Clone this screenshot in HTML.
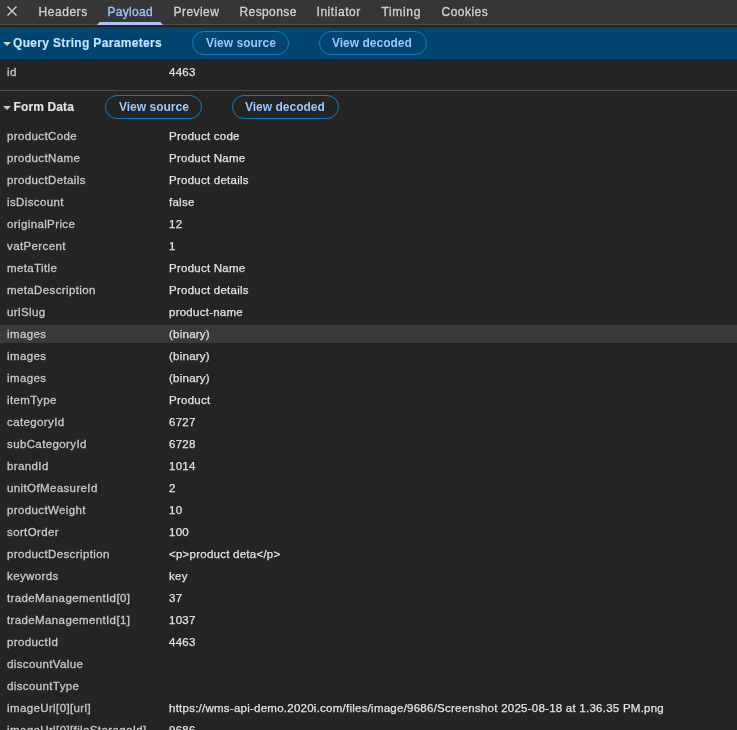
<!DOCTYPE html>
<html><head><meta charset="utf-8">
<style>
html,body{margin:0;padding:0;}
body{width:737px;height:730px;overflow:hidden;background:#242424;position:relative;font-family:"Liberation Sans",sans-serif;font-size:12px;}
#root{position:absolute;left:0;top:0;width:737px;height:730px;background:#242424;will-change:transform;}
.t{position:absolute;line-height:14px;white-space:pre;-webkit-text-stroke:0.25px currentColor;}
#tabbar{position:absolute;left:0;top:0;width:737px;height:24px;background:#363636;}
#tabline{position:absolute;left:0;top:24px;width:737px;height:1px;background:#505050;}
.tab{color:#d2d2d2;top:5px;-webkit-text-stroke:0.3px currentColor;}
#ul{position:absolute;left:97px;top:22px;width:66px;height:3px;background:#a8c7fa;clip-path:polygon(2.5px 0,calc(100% - 2.5px) 0,100% 100%,0 100%);}
#qsp{position:absolute;left:0;top:27px;width:737px;height:32px;background:#004470;}
.hdr{font-weight:bold;-webkit-text-stroke:0.15px currentColor;}
.btn{position:absolute;box-sizing:border-box;height:24px;border:1px solid #137bbd;border-radius:12px;}
.bt{color:#9cc6fc;font-weight:bold;-webkit-text-stroke:0;}
.sep{position:absolute;left:0;top:90px;width:737px;height:1px;background:#505050;}
.k{color:#c9c9c9;left:7px;font-size:11.5px;letter-spacing:0.38px;-webkit-text-stroke:0.3px currentColor;}
.v{color:#e3e3e3;left:169px;font-size:11.5px;letter-spacing:0.245px;}
#hl{position:absolute;left:0;top:325px;width:737px;height:18px;background:#393939;}
.tri{position:absolute;width:0;height:0;border-left:4px solid transparent;border-right:4px solid transparent;border-top:4px solid #c8c8c8;}
</style></head><body>
<div id="root">
<div id="tabbar"></div>
<div id="tabline"></div>
<svg style="position:absolute;left:7px;top:6px" width="10" height="10" viewBox="0 0 10 10"><path d="M0.5 0.5L9.5 9.5M9.5 0.5L0.5 9.5" stroke="#c7c7c7" stroke-width="1.5"/></svg>
<div class="t tab" style="left:38.5px;letter-spacing:0.55px">Headers</div>
<div class="t tab" style="left:107.5px;letter-spacing:0.3px;color:#a0c6fc">Payload</div>
<div class="t tab" style="left:173.5px;letter-spacing:0.45px">Preview</div>
<div class="t tab" style="left:239.5px;letter-spacing:0.4px">Response</div>
<div class="t tab" style="left:316.5px;letter-spacing:0.55px">Initiator</div>
<div class="t tab" style="left:381.5px;letter-spacing:0.66px">Timing</div>
<div class="t tab" style="left:441.5px;letter-spacing:0.48px">Cookies</div>
<div id="ul"></div>

<div id="qsp"></div>
<div class="tri" style="left:3px;top:42px;border-top-color:#d8d0cc"></div>
<div class="t hdr" style="left:13px;top:36px;color:#c2e7ff;letter-spacing:0.33px">Query String Parameters</div>
<div class="btn" style="left:192px;top:31px;width:97px"></div>
<div class="t bt" style="left:206px;top:36px">View source</div>
<div class="btn" style="left:319px;top:31px;width:108px"></div>
<div class="t bt" style="left:332px;top:36px">View decoded</div>

<div class="t k" style="top:65.4px">id</div>
<div class="t v" style="top:65.4px">4463</div>
<div class="sep"></div>

<div class="tri" style="left:3px;top:106px"></div>
<div class="t hdr" style="left:13.5px;top:100px;color:#e3e3e3;letter-spacing:0.12px">Form Data</div>
<div class="btn" style="left:105px;top:95px;width:97px"></div>
<div class="t bt" style="left:119px;top:100px">View source</div>
<div class="btn" style="left:232px;top:95px;width:107px"></div>
<div class="t bt" style="left:245px;top:100px">View decoded</div>

<div id="hl"></div>
<!--ROWS-->
<div class="t k" style="top:129.4px">productCode</div>
<div class="t v" style="top:129.4px">Product code</div>
<div class="t k" style="top:151.4px">productName</div>
<div class="t v" style="top:151.4px">Product Name</div>
<div class="t k" style="top:173.4px">productDetails</div>
<div class="t v" style="top:173.4px">Product details</div>
<div class="t k" style="top:195.4px">isDiscount</div>
<div class="t v" style="top:195.4px">false</div>
<div class="t k" style="top:217.4px">originalPrice</div>
<div class="t v" style="top:217.4px">12</div>
<div class="t k" style="top:239.4px">vatPercent</div>
<div class="t v" style="top:239.4px">1</div>
<div class="t k" style="top:261.4px">metaTitle</div>
<div class="t v" style="top:261.4px">Product Name</div>
<div class="t k" style="top:283.4px">metaDescription</div>
<div class="t v" style="top:283.4px">Product details</div>
<div class="t k" style="top:305.4px">urlSlug</div>
<div class="t v" style="top:305.4px">product-name</div>
<div class="t k" style="top:327.4px">images</div>
<div class="t v" style="top:327.4px">(binary)</div>
<div class="t k" style="top:349.4px">images</div>
<div class="t v" style="top:349.4px">(binary)</div>
<div class="t k" style="top:371.4px">images</div>
<div class="t v" style="top:371.4px">(binary)</div>
<div class="t k" style="top:393.4px">itemType</div>
<div class="t v" style="top:393.4px">Product</div>
<div class="t k" style="top:415.4px">categoryId</div>
<div class="t v" style="top:415.4px">6727</div>
<div class="t k" style="top:437.4px">subCategoryId</div>
<div class="t v" style="top:437.4px">6728</div>
<div class="t k" style="top:459.4px">brandId</div>
<div class="t v" style="top:459.4px">1014</div>
<div class="t k" style="top:481.4px">unitOfMeasureId</div>
<div class="t v" style="top:481.4px">2</div>
<div class="t k" style="top:503.4px">productWeight</div>
<div class="t v" style="top:503.4px">10</div>
<div class="t k" style="top:525.4px">sortOrder</div>
<div class="t v" style="top:525.4px">100</div>
<div class="t k" style="top:547.4px">productDescription</div>
<div class="t v" style="top:547.4px">&lt;p&gt;product deta&lt;/p&gt;</div>
<div class="t k" style="top:569.4px">keywords</div>
<div class="t v" style="top:569.4px">key</div>
<div class="t k" style="top:591.4px">tradeManagementId[0]</div>
<div class="t v" style="top:591.4px">37</div>
<div class="t k" style="top:613.4px">tradeManagementId[1]</div>
<div class="t v" style="top:613.4px">1037</div>
<div class="t k" style="top:635.4px">productId</div>
<div class="t v" style="top:635.4px">4463</div>
<div class="t k" style="top:657.4px">discountValue</div>
<div class="t k" style="top:679.4px">discountType</div>
<div class="t k" style="top:701.4px">imageUrl[0][url]</div>
<div class="t v" style="top:701.4px">https://wms-api-demo.2020i.com/files/image/9686/Screenshot 2025-08-18 at 1.36.35 PM.png</div>
<div class="t k" style="top:723.4px">imageUrl[0][fileStorageId]</div>
<div class="t v" style="top:723.4px">9686</div>
<!--/ROWS-->
</div>
</body></html>
